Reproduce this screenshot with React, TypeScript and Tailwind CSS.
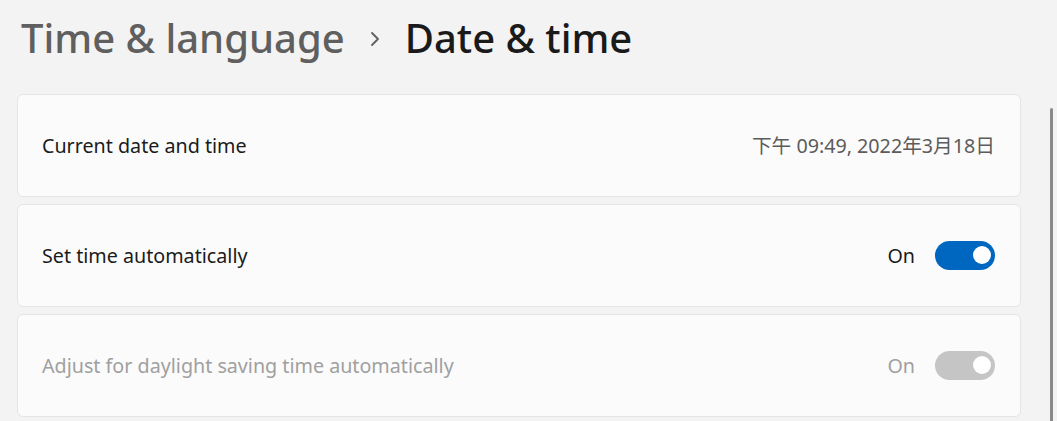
import React from "react";

const font = { fontFamily: '"Noto Sans", "Noto Sans CJK SC", sans-serif' };

function Toggle({ disabled }: { disabled?: boolean }) {
  return (
    <div
      className={`flex h-[29px] w-[60px] items-center justify-end rounded-full pr-[4px] ${
        disabled ? "bg-[#c5c5c5]" : "bg-[#0067c0]"
      }`}
    >
      <div className="h-[18px] w-[18px] rounded-full bg-white" />
    </div>
  );
}

function Card({ children }: { children: React.ReactNode }) {
  return (
    <div className="flex h-[103px] items-center justify-between rounded-[6px] border border-[#e5e5e5] bg-[#fbfbfb] pl-[24px] pr-[25px]">
      {children}
    </div>
  );
}

export default function App() {
  return (
    <div className="relative h-[421px] w-[1057px] overflow-hidden bg-[#f3f3f3]" style={font}>
      <div className="flex items-center pl-[21px] pt-[12px] text-[40px] font-medium leading-[52px]">
        <span className="text-[#5f5f5f]">Time &amp; language</span>
        <svg className="mx-[24px] mt-[2px]" width="12" height="18" viewBox="0 0 12 18">
          <path d="M3 3 L9 9 L3 15" fill="none" stroke="#5f5f5f" strokeWidth="1.8" strokeLinecap="round" strokeLinejoin="round" />
        </svg>
        <span className="text-[#1a1a1a]">Date &amp; time</span>
      </div>
      <div className="mt-[30px] flex w-[1021px] flex-col gap-[7px] pl-[17px]">
        <Card>
          <span className="text-[19.7px] text-[#1b1b1b]">Current date and time</span>
          <span className="text-[19.7px] text-[#5c5c5c]">下午 09:49, 2022年3月18日</span>
        </Card>
        <Card>
          <span className="text-[19.7px] text-[#1b1b1b]">Set time automatically</span>
          <div className="flex items-center gap-[20px]">
            <span className="text-[19.7px] text-[#1b1b1b]">On</span>
            <Toggle />
          </div>
        </Card>
        <Card>
          <span className="text-[19.7px] text-[#a0a0a0]">Adjust for daylight saving time automatically</span>
          <div className="flex items-center gap-[20px]">
            <span className="text-[19.7px] text-[#a0a0a0]">On</span>
            <Toggle disabled />
          </div>
        </Card>
      </div>
      <div className="absolute right-[4px] top-[108px] h-[320px] w-[3px] rounded-full bg-[#8a8a8a]" />
    </div>
  );
}
